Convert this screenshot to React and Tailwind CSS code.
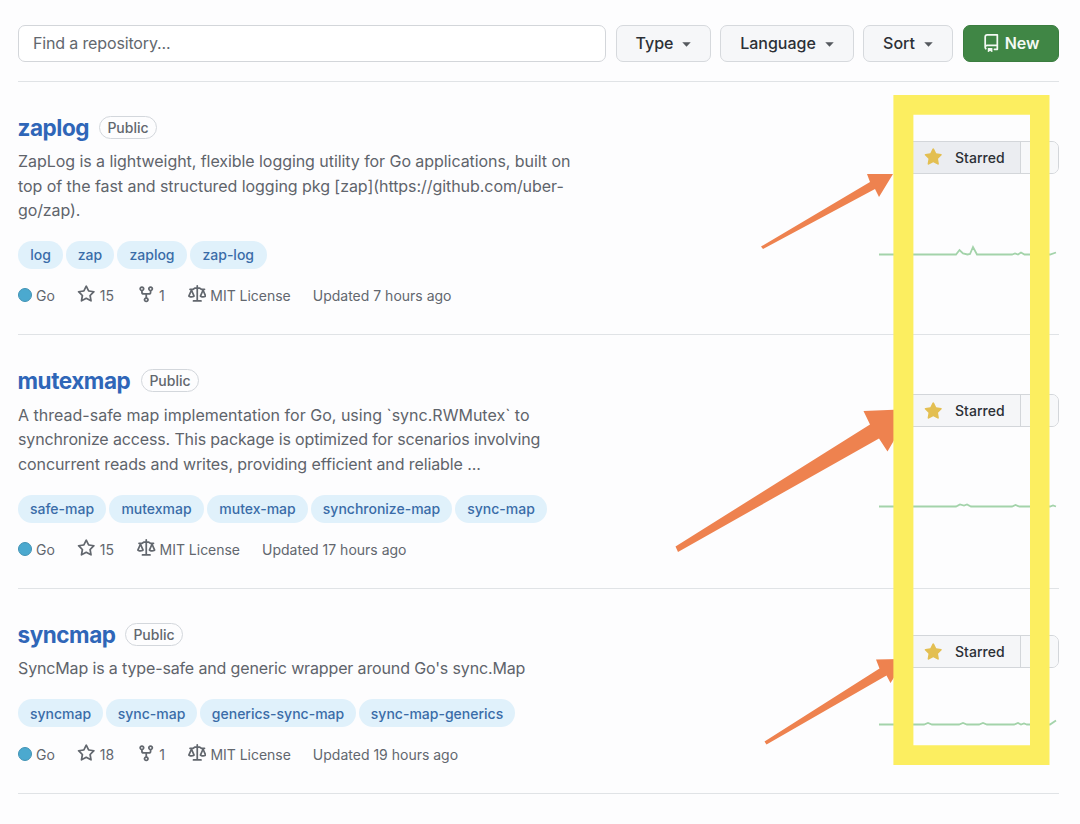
const icons = {
  star: "M8 .25a.75.75 0 0 1 .673.418l1.882 3.815 4.21.612a.75.75 0 0 1 .416 1.279l-3.046 2.97.719 4.192a.751.751 0 0 1-1.088.791L8 12.347l-3.766 1.98a.75.75 0 0 1-1.088-.79l.72-4.194L.818 6.374a.75.75 0 0 1 .416-1.28l4.21-.611L7.327.668A.75.75 0 0 1 8 .25Zm0 2.445L6.615 5.5a.75.75 0 0 1-.564.41l-3.097.45 2.24 2.184a.75.75 0 0 1 .216.664l-.528 3.084 2.769-1.456a.75.75 0 0 1 .698 0l2.77 1.456-.53-3.084a.75.75 0 0 1 .216-.664l2.24-2.183-3.096-.45a.75.75 0 0 1-.564-.41L8 2.694Z",
  starFill:
    "M8 .25a.75.75 0 0 1 .673.418l1.882 3.815 4.21.612a.75.75 0 0 1 .416 1.279l-3.046 2.97.719 4.192a.751.751 0 0 1-1.088.791L8 12.347l-3.766 1.98a.75.75 0 0 1-1.088-.79l.72-4.194L.818 6.374a.75.75 0 0 1 .416-1.28l4.21-.611L7.327.668A.75.75 0 0 1 8 .25Z",
  fork: "M5 5.372v.878c0 .414.336.75.75.75h4.5a.75.75 0 0 0 .75-.75v-.878a2.25 2.25 0 1 1 1.5 0v.878a2.25 2.25 0 0 1-2.25 2.25h-1.5v2.128a2.251 2.251 0 1 1-1.5 0V8.5h-1.5A2.25 2.25 0 0 1 3.5 6.25v-.878a2.25 2.25 0 1 1 1.5 0ZM5 3.25a.75.75 0 1 0-1.5 0 .75.75 0 0 0 1.5 0Zm6.75.75a.75.75 0 1 0 0-1.5.75.75 0 0 0 0 1.5Zm-3 8.75a.75.75 0 1 0-1.5 0 .75.75 0 0 0 1.5 0Z",
  law: "M8.75.75V2h.985c.304 0 .603.08.867.231l1.29.736c.038.022.08.033.124.033h2.234a.75.75 0 0 1 0 1.5h-.427l2.111 4.692a.75.75 0 0 1-.154.838l-.53-.53.529.531-.001.002-.002.002-.006.006-.006.005-.01.01-.045.04c-.21.176-.441.327-.686.45C14.556 10.78 13.88 11 13 11a4.498 4.498 0 0 1-2.023-.454 3.544 3.544 0 0 1-.686-.45l-.045-.04-.016-.015-.006-.006-.004-.004v-.001a.75.75 0 0 1-.154-.838L12.178 4.5h-.162c-.305 0-.604-.079-.868-.231l-1.29-.736a.245.245 0 0 0-.124-.033H8.75V13h2.5a.75.75 0 0 1 0 1.5h-6.5a.75.75 0 0 1 0-1.5h2.5V3.5h-.984a.245.245 0 0 0-.124.033l-1.289.737c-.265.15-.564.23-.869.23h-.162l2.112 4.692a.75.75 0 0 1-.154.838l-.53-.53.529.531-.001.002-.002.002-.006.006-.016.015-.045.04c-.21.176-.441.327-.686.45C4.556 10.78 3.88 11 3 11a4.498 4.498 0 0 1-2.023-.454 3.544 3.544 0 0 1-.686-.45l-.045-.04-.016-.015-.006-.006-.004-.004v-.001a.75.75 0 0 1-.154-.838L2.178 4.5H1.75a.75.75 0 0 1 0-1.5h2.234a.249.249 0 0 0 .125-.033l1.288-.737c.265-.15.564-.23.869-.23h.984V.75a.75.75 0 0 1 1.5 0Zm2.945 8.477c.285.135.718.273 1.305.273s1.02-.138 1.305-.273L13 6.327Zm-10 0c.285.135.718.273 1.305.273s1.02-.138 1.305-.273L3 6.327Z",
  repo: "M2 2.5A2.5 2.5 0 0 1 4.5 0h8.75a.75.75 0 0 1 .75.75v12.5a.75.75 0 0 1-.75.75h-2.5a.75.75 0 0 1 0-1.5h1.75v-2h-8a1 1 0 0 0-.714 1.7.75.75 0 1 1-1.072 1.05A2.495 2.495 0 0 1 2 11.5Zm10.5-1h-8a1 1 0 0 0-1 1v6.708A2.486 2.486 0 0 1 4.5 9h8ZM5 12.25a.25.25 0 0 1 .25-.25h3.5a.25.25 0 0 1 .25.25v3.25a.25.25 0 0 1-.4.2l-1.45-1.087a.249.249 0 0 0-.3 0L5.4 15.7a.25.25 0 0 1-.4-.2Z",
};

function Icon({ name, className }) {
  return (
    <svg viewBox="0 0 16 16" fill="currentColor" className={`shrink-0 ${className}`}>
      <path d={icons[name]} />
    </svg>
  );
}

function FilterButton({ label, className }) {
  return (
    <button
      className={`flex items-center justify-center gap-[9px] rounded-[7px] border border-[#d6d9dd] bg-[#f6f7f9] pb-px text-[16px] font-medium text-[#2c3036] ${className}`}
    >
      {label}
      <svg viewBox="0 0 10 5" className="mt-[3px] h-[5px] w-[9px] fill-[#55595e]">
        <path d="M0.3 0h9.4L5 5Z" />
      </svg>
    </button>
  );
}

const repos = [
  {
    name: "zaplog",
    nameClass: "w-[71px]",
    lines: [
      ["ZapLog is a lightweight, flexible logging utility for Go applications, built on", "tracking-[-0.06px]"],
      ["top of the fast and structured logging pkg [zap](https://github.com/uber-", "tracking-[-0.055px]"],
      ["go/zap).", "tracking-[-0.1px]"],
    ],
    topics: [
      ["log", "w-[45px]"],
      ["zap", "w-[48px]"],
      ["zaplog", "w-[70px]"],
      ["zap-log", "w-[76.5px]"],
    ],
    stars: 15,
    forks: 1,
    updated: "Updated 7 hours ago",
    height: "h-[253px]",
    textTop: "mt-[8px]",
    topicsTop: "mt-[18px]",
    starTop: "mt-[58.5px]",
    starBg: "bg-[#ebedf1]",
    chartTop: "mt-[68.5px]",
    chart: "M0 12.5H77l3.500-4.500 3.500 3.500 4.500 1 2.500-.5L94 5l4 7.500H133l3-1 3 1 3-2 3.500 2H171l6-2",
  },
  {
    name: "mutexmap",
    nameClass: "w-[113px]",
    lines: [
      ["A thread-safe map implementation for Go, using `sync.RWMutex` to", "tracking-[0.01px]"],
      ["synchronize access. This package is optimized for scenarios involving", "tracking-[-0.14px]"],
      ["concurrent reads and writes, providing efficient and reliable ...", "tracking-[-0.1px]"],
    ],
    topics: [
      ["safe-map", "w-[88px]"],
      ["mutexmap", "w-[95px]"],
      ["mutex-map", "w-[101px]"],
      ["synchronize-map", "w-[141px]"],
      ["sync-map", "w-[92px]"],
    ],
    stars: 15,
    updated: "Updated 17 hours ago",
    height: "h-[254px]",
    textTop: "mt-[8.5px]",
    topicsTop: "mt-[18.5px]",
    starTop: "mt-[59px]",
    starBg: "bg-[#f5f6f8]",
    chartTop: "mt-[67px]",
    chart: "M0 12.500H77l4-2 4 1 3-1 4 2H133l3.500-1.500 4 1.500H171l3-1 3 1",
  },
  {
    name: "syncmap",
    nameClass: "w-[97px]",
    lines: [["SyncMap is a type-safe and generic wrapper around Go's sync.Map", "tracking-[-0.14px]"]],
    topics: [
      ["syncmap", "w-[85px]"],
      ["sync-map", "w-[91px]"],
      ["generics-sync-map", "w-[156px]"],
      ["sync-map-generics", "w-[156px]"],
    ],
    stars: 18,
    forks: 1,
    updated: "Updated 19 hours ago",
    height: "h-[205px]",
    textTop: "mt-[8px]",
    topicsTop: "mt-[18.5px]",
    starTop: "mt-[46px]",
    starBg: "bg-[#f5f6f8]",
    chartTop: "mt-[43.5px]",
    chart: "M0 12.500H45l4-1.500 4 1.500H80l4-1.500 4 1.500H100l4-1.500 4 1.500H135l4-1.500 3 1.500 3-1 3 1H171l6-4",
  },
];

function Repo({ repo }) {
  return (
    <li className={`flex justify-between border-b border-[#e0e3e6] ${repo.height}`}>
      <div className="pt-[32px]">
        <div className="flex h-[27px] items-center gap-[10px]">
          <h3
            className={`-ml-[0.5px] whitespace-nowrap text-[22.5px] font-[650] leading-[27px] tracking-[-0.45px] text-[#2f66b8] ${repo.nameClass}`}
          >
            {repo.name}
          </h3>
          <span className="flex h-[23px] w-[58px] items-center justify-center rounded-full border border-[#d3d7dc] pb-px pl-px text-[14px] font-medium text-[#62676e]">
            Public
          </span>
        </div>
        <p className={`text-[16px] leading-[24.5px] text-[#5f646b] ${repo.textTop}`}>
          {repo.lines.map(([line, tracking]) => (
            <span key={line} className={`block whitespace-nowrap ${tracking}`}>
              {line}
            </span>
          ))}
        </p>
        <div className={`flex gap-[3px] ${repo.topicsTop}`}>
          {repo.topics.map(([topic, width]) => (
            <span
              key={topic}
              className={`flex h-[28px] items-center justify-center whitespace-nowrap rounded-full bg-[#e0f1fb] text-[14px] font-medium text-[#3a6ca8] ${width}`}
            >
              {topic}
            </span>
          ))}
        </div>
        <div className="mt-[17px] flex h-[20px] items-center gap-[22.5px] whitespace-nowrap text-[14px] text-[#62676e]">
          <span className="flex items-center gap-[4px]">
            <span className="-mt-px size-[14px] rounded-full border border-[#4293b4] bg-[#4ba9cf]" />
            Go
          </span>
          <span className="flex items-center gap-[4px]">
            <Icon name="star" className="-mt-[2px] size-[18.5px]" />
            {repo.stars}
          </span>
          {repo.forks && (
            <span className="flex items-center gap-[4px]">
              <Icon name="fork" className="-mt-[2px] size-[18.5px]" />
              {repo.forks}
            </span>
          )}
          <span className="ml-[0.5px] flex items-center gap-[4px] tracking-[-0.02px]">
            <Icon name="law" className="-mt-[2px] size-[18.5px]" />
            MIT License
          </span>
          <span className="-ml-[0.5px]">{repo.updated}</span>
        </div>
      </div>
      <div className="flex w-[180px] flex-col items-end">
        <div
          className={`flex h-[33px] w-[154px] overflow-hidden rounded-[7px] border border-[#d3d6da] text-[14px] font-medium text-[#2c3036] ${repo.starTop}`}
        >
          <div
            className={`flex w-[115px] items-center gap-[13px] border-r border-[#d3d6da] pl-[17.5px] tracking-[0.05px] ${repo.starBg}`}
          >
            <Icon name="starFill" className="mt-px size-[18.5px] text-[#e3bf52]" />
            Starred
          </div>
          <div className="flex-1 bg-[#f7f8fa]" />
        </div>
        <svg
          viewBox="0 0 180 16"
          className={`h-[16px] w-[180px] fill-none stroke-[#a3d3aa] stroke-[1.800] ${repo.chartTop}`}
        >
          <path d={repo.chart} />
        </svg>
      </div>
    </li>
  );
}

export default function App() {
  return (
    <div className="relative h-[824px] w-[1080px] overflow-hidden bg-[#fdfdfe] pl-[18px] pr-[21px] pt-[25px] font-['Inter','Liberation_Sans',sans-serif]">
      <header className="flex h-[57px] items-start border-b border-[#e0e3e6]">
        <div className="flex h-[37px] w-[588px] items-center rounded-[7px] border border-[#d3d6da] bg-white pb-px pl-[14px] text-[16px] tracking-[-0.15px] text-[#62676e]">
          Find a repository...
        </div>
        <FilterButton label="Type" className="ml-[10px] h-[37px] w-[95px]" />
        <FilterButton label="Language" className="ml-[9px] h-[37px] w-[134px]" />
        <FilterButton label="Sort" className="ml-[9px] h-[37px] w-[90px]" />
        <button className="ml-[9.5px] flex h-[37px] flex-1 items-center justify-center gap-[4px] rounded-[7px] border border-[#3b7d40] bg-[#408645] pb-px text-[16px] font-semibold tracking-[-0.1px] text-[#f4faf4]">
          <Icon name="repo" className="size-[18.5px]" />
          New
        </button>
      </header>
      <ul>
        {repos.map((repo) => (
          <Repo key={repo.name} repo={repo} />
        ))}
      </ul>

      <svg viewBox="0 0 1080 824" className="pointer-events-none absolute inset-0 h-[824px] w-[1080px] fill-[#ee824f]">
        <path d="M761 246.500 870 182 867 174H893L879 197 875 189 763 249Z" />
        <path d="M675.500 546.500 870 424.500 863.500 411 900 409.500V430L887.500 451.500 879 438.500 678 552Z" />
        <path d="M764.500 741.500 879.500 668.500 876 659.500 900 659V668L890.500 683 886.500 675.500 766.500 744.500Z" />
        <path className="fill-[#fcee60]" fillRule="evenodd" d="M893.400 95H1049.500V765H893.400ZM913.400 114.700V745.300H1030V114.700Z" />
      </svg>
    </div>
  );
}
